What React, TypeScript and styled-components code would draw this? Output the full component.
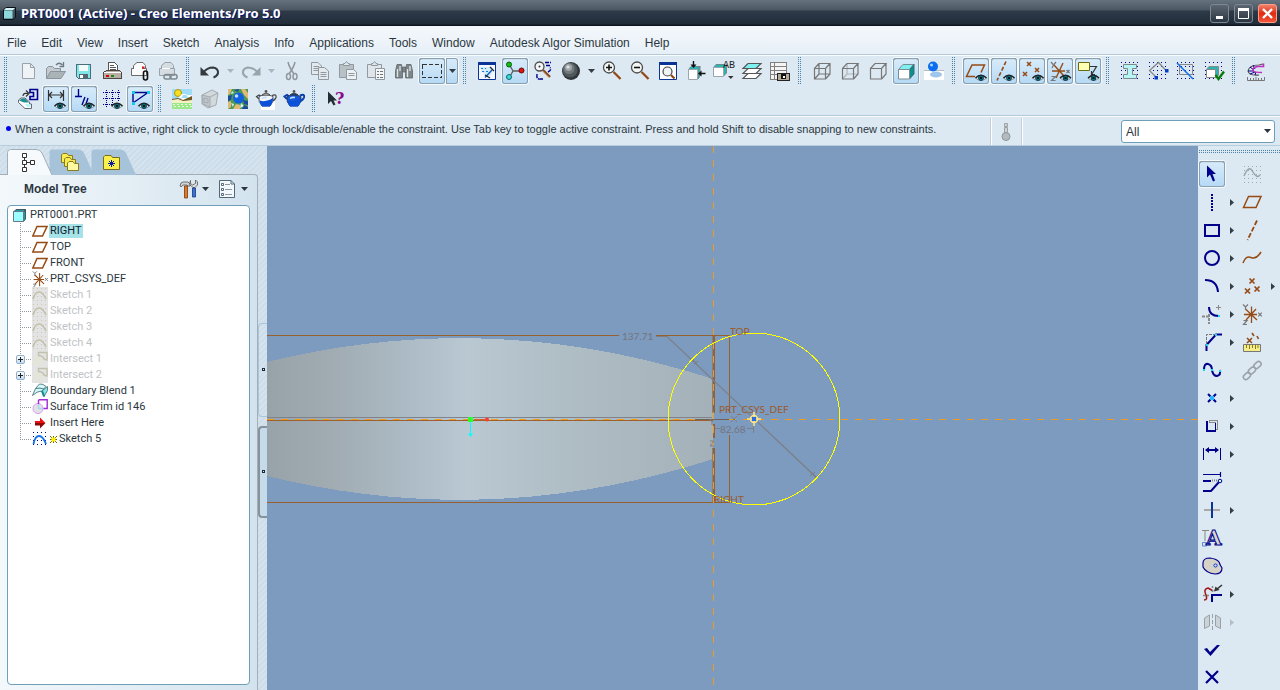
import React from 'react';
import styled, { createGlobalStyle, css } from 'styled-components';

const NAVY = '#00008b';
const BROWN = '#964a14';
const GREY = '#8a949b';
const INK = '#2b3740';
const TEAL = '#007f80';

const GlobalStyle = createGlobalStyle`
  *, *::before, *::after { box-sizing: border-box; }
  html, body { margin: 0; padding: 0; }
  body { font-family: 'Liberation Sans', Arial, sans-serif; font-size: 12px; color: ${INK}; }
  button { font: inherit; color: inherit; border: 0; padding: 0; background: none; }
  ul { list-style: none; margin: 0; padding: 0; }
`;

/* ---------- drawing helpers ---------- */

const Eye = ({ x = 16, y = 19 }: { x?: number; y?: number }) => (
  <g>
    <path d={`M${x - 5.5} ${y}Q${x} ${y - 5.5} ${x + 5.5} ${y}Q${x} ${y + 5} ${x - 5.5} ${y}z`} fill="#e8f0f4" stroke="#6c7a80" strokeWidth=".8" />
    <path d={`M${x - 5.5} ${y}Q${x} ${y - 5.5} ${x + 5.5} ${y}`} fill="none" stroke="#222" strokeWidth="1.4" />
    <circle cx={x} cy={y} r="2.5" fill={TEAL} stroke="#123" strokeWidth=".8" />
    <rect x={x - 1} y={y - 1} width="2" height="2" fill="#012" />
  </g>
);

const Dots = ({ x = 3, y = 3, n = 5, step = 4, color = NAVY }: { x?: number; y?: number; n?: number; step?: number; color?: string }) => (
  <g stroke={color} strokeDasharray={`1 ${step - 1}`} shapeRendering="crispEdges">
    {Array.from({ length: n }, (_, i) => (
      <path key={i} d={`M${x} ${y + i * step + 0.5}h${(n - 1) * step + 1}`} />
    ))}
  </g>
);

const Cross = ({ x, y, s = 2, c = BROWN, w = 1.5 }: { x: number; y: number; s?: number; c?: string; w?: number }) => (
  <path d={`M${x - s} ${y - s}l${2 * s} ${2 * s}m0 ${-2 * s}l${-2 * s} ${2 * s}`} stroke={c} strokeWidth={w} fill="none" />
);

const Lens = ({ x, y, r = 5.5 }: { x: number; y: number; r?: number }) => (
  <g>
    <path d={`M${x + r - 1} ${y + r - 1}L${x + r + 6} ${y + r + 6}`} stroke="#8c4a1c" strokeWidth="2.4" />
    <path d={`M${x + r - 1.5} ${y + r}L${x + r + 5} ${y + r + 6.5}`} stroke="#d9a27a" strokeWidth=".7" />
    <circle cx={x} cy={y} r={r} fill="#f4f6f6" stroke="#4b4b4b" strokeWidth="1.3" />
  </g>
);

const Mail = ({ c, fill }: { c: string; fill: string }) => (
  <g stroke={c} fill={fill}>
    <path d="M5.5 9.5V6.5L9 3.500H15L17.5 6.5V9.5z" />
    <path d="M3.5 9.5H18.5V16.5H3.5z" />
    <path d="M6 9.500H14" stroke="#fff" />
  </g>
);

const Teapot = ({ light = false }: { light?: boolean }) => (
  <g>
    {light && <path d="M7 14h14v9H7z" fill="#fff" />}
    <path d="M5 12L2.5 9.5L5 8L8 10M18 8.5q5-2 4 2q-1 3-5 4" fill="none" stroke={light ? '#444' : '#0a3fb0'} strokeWidth={light ? 1.2 : 2} />
    <path d="M5 9.5Q12 6 19 9.5Q20 15 16 19H8Q4 15 5 9.5z" fill={light ? '#f4f4f4' : '#1457d8'} stroke="#26324a" strokeWidth=".8" />
    <path d="M5.5 13.5Q12 16 19 11Q19 16 16 19.5H8Q6 17 5.5 13.5z" fill="#0b50d8" />
    <path d="M8 8Q12 4.5 16 8z" fill={light ? '#ddd' : '#0c43b8'} stroke="#333" strokeWidth=".8" />
    <circle cx="12" cy="4.5" r="1.4" fill="#555" />
    <path d="M8 11.5Q10 10 13 10.5" stroke="#bfe0ff" strokeWidth="1.5" fill="none" />
  </g>
);

const Csys = () => (
  <g>
    <path d="M11.5 4.5V21M4 12.5H17M5.5 7L17 18M16 7L6 18" stroke={BROWN} strokeWidth="1.3" fill="none" />
    <path d="M3 2.5L5.5 5L8 2.5M5.5 5V8M3.5 18.5H7L3.5 22.5H7" stroke="#777" strokeWidth="1.2" fill="none" />
    <Cross x={20} y={12.5} s={1.8} c="#777" w={1.2} />
  </g>
);

/* ---------- icon drawings, all on a 24 by 24 grid ---------- */

const icons = {
  newFile: <path d="M6.500 4.500H14.500L18.500 8.500V19.500H6.500zM14.500 4.500V8.500H18.500" fill="#f0f3f6" stroke="#9aa2aa" />,
  open: (
    <g stroke={GREY} fill="#c3cbd0">
      <path d="M2.5 19.5V9.5L4.5 7.5H8.5L10.5 9.5H16.5V12" />
      <path d="M2.5 19.5L6.5 12.5H21.5L17 19.5z" fill="#aab3b8" />
      <path d="M12 6Q15 2.5 18.5 6M19.5 3V7.5H15.5" fill="none" stroke="#6f7a80" strokeWidth="1.3" />
    </g>
  ),
  save: (
    <g shapeRendering="crispEdges">
      <path d="M4.500 5.500H18.500V19.500H6.500L4.500 17.500z" fill="#7fe6ea" stroke="#4a6e7a" />
      <path d="M7 6H16V12H7z" fill="#f3fafa" />
      <path d="M7 15H16V19H7z" fill="#56666e" />
      <path d="M8 16H11V19H8z" fill="#fff" />
    </g>
  ),
  print: (
    <g shapeRendering="crispEdges">
      <path d="M8.5 12V3.5H14.5L17.5 6.5V12z" fill="#fff" stroke="#555" />
      <path d="M10 6.5H14M10 8.5H16M10 10.5H16" stroke="#555" />
      <path d="M3.5 13.5L6.5 11.5H19.5L21.5 13.5V19.5H3.5z" fill="#b7aea6" stroke="#4d4744" />
      <path d="M4 13.5H21" stroke="#fff" />
      <path d="M6 16.5H9" stroke="#d00" strokeWidth="2" />
      <path d="M11 16.5H14" stroke="#1a8a1a" strokeWidth="2" />
    </g>
  ),
  mailClip: (
    <g>
      <Mail c="#6b6b6b" fill="#fbfbfb" />
      <path d="M14 8.5h2.5" stroke="#e11" strokeWidth="2" />
      <rect x="15.5" y="12" width="4" height="9" rx="2" fill="none" stroke="#111" strokeWidth="1.6" />
    </g>
  ),
  mailLink: (
    <g>
      <Mail c="#9aa2a8" fill="#d6dde2" />
      <g fill="none" stroke="#7f898f" strokeWidth="1.5">
        <rect x="8" y="15.5" width="7" height="4.5" rx="2" />
        <rect x="14" y="15.5" width="7" height="4.5" rx="2" />
      </g>
    </g>
  ),
  undo: (
    <g>
      <path d="M5 14Q9 8.5 15 8.5Q20.5 9.5 20 14Q19.5 17 15.5 18.5" fill="none" stroke="#333a40" strokeWidth="2" />
      <path d="M2.5 8V16.5H11z" fill="#333a40" />
    </g>
  ),
  redo: (
    <g>
      <path d="M19 14Q15 8.5 9 8.5Q3.5 9.5 4 14Q4.5 17 8.5 18.5" fill="none" stroke="#99a3a9" strokeWidth="2" />
      <path d="M21.5 8V16.5H13z" fill="#99a3a9" />
    </g>
  ),
  cut: (
    <g fill="none" stroke="#8f979c" strokeWidth="1.5">
      <path d="M8 3Q9 8 14 15M15 3Q14 8 9 15" />
      <ellipse cx="8.5" cy="17.5" rx="2" ry="3" />
      <ellipse cx="15" cy="17.5" rx="2" ry="3" />
    </g>
  ),
  copy: (
    <g stroke="#8f999f" fill="#e3e9ec">
      <path d="M3.5 3.5H10L13.5 7V15.5H3.5zM5.5 7.5H11M5.5 9.5H11M5.5 11.5H11" />
      <path d="M10.5 8.5H16.5L20.5 12V20.5H10.5zM12.5 13.5H18.5M12.5 15.5H18.5M12.5 17.5H18.5" />
    </g>
  ),
  paste: (
    <g stroke="#8f999f" fill="#b8c1c6">
      <path d="M3.5 5.5H17.5V18.5H3.5z" />
      <path d="M7.5 6.5V4.5H9L10.5 2.5L12 4.5H13.5V6.5z" fill="#e3e9ec" />
      <path d="M10.5 10.5H17.5L20.5 13V20.5H10.5zM12.5 14.5H18.5M12.5 16.5H18.5" fill="#eef1f3" />
    </g>
  ),
  pasteSpecial: (
    <g stroke="#8f999f" fill="#dfe5e9">
      <path d="M3.5 5.5H17.5V18.5H3.5z" />
      <path d="M7.5 6.5V4.5H9L10.5 2.5L12 4.5H13.5V6.5z" />
      <path d="M11.5 9.5H20.5V20.5H11.5z" fill="#f3f5f6" />
      <path d="M13 12.5h2m1 0h3M13 15.5h2m1 0h3M13 18.5h2m1 0h3" stroke="#6b767c" />
    </g>
  ),
  find: (
    <g fill="#7d8588" stroke="#5d666a" strokeWidth=".8">
      <path d="M5 5.5H9.5L10.5 12V19H3.5V12zM14.5 5.5H19L20.5 12V19H13.5V12z" />
      <path d="M10.5 8H13.5V13H10.5z" />
      <path d="M5.5 10V18M8 7V12M15.5 10V18M18 7V12" stroke="#dfe6e8" strokeWidth="1.3" />
    </g>
  ),
  selectBox: <path d="M2.500 5.500H21.500V18.500H2.500z" fill="none" stroke="#333" strokeDasharray="4 2" shapeRendering="crispEdges" />,
  sketchView: (
    <g>
      <path d="M3.5 3.5H20.5V20.5H3.5z" fill="#f2f8fd" stroke="#0a3596" />
      <path d="M3 3H21V6H3z" fill="#0a3596" />
      <path d="M5 8L17 8Q19 14 14 18L10 17z" fill="#d3edfb" />
      <path d="M6 9.5H11M7 12.5H14M10 16.5H13" stroke="#1a7ad0" strokeDasharray="2 2" fill="none" />
      <path d="M10 18.500L17 11" fill="none" stroke="#0a5fc0" strokeWidth="1.4" />
      <path d="M10 16L15 19M15 8L19 12" fill="none" stroke="#222" strokeWidth="1.2" />
    </g>
  ),
  nodes: (
    <g>
      <path d="M6 5L10 12L6 19M10 12H19" fill="none" stroke="#5a5a5a" strokeWidth="1.3" />
      <circle cx="6" cy="5.5" r="2.5" fill="#12c012" stroke="#075a07" />
      <circle cx="18.5" cy="11.5" r="2.5" fill="#e01414" stroke="#6a0707" />
      <circle cx="6" cy="18" r="2.5" fill="#39dada" stroke="#0a6a6a" />
    </g>
  ),
  repaint: (
    <g>
      <Lens x={8.5} y={7.5} r={4.5} />
      <circle cx="8.5" cy="7.5" r="1" fill="#333" />
      <path d="M14 3.5H20M15 6.5H19M17 13Q21 11 19 8.500M6 15Q5 21 10 20M12 20H9" fill="none" stroke={NAVY} strokeWidth="1.4" strokeDasharray="4 1" />
    </g>
  ),
  shade: (
    <g>
      <circle cx="12" cy="12" r="9" fill="#30363a" />
      <circle cx="11" cy="11" r="7.5" fill="#50585c" />
      <circle cx="10" cy="9.5" r="5.5" fill="#72797d" />
      <circle cx="9.5" cy="8.5" r="3.5" fill="#a0a6a9" />
      <circle cx="9" cy="8" r="1.6" fill="#dfe3e5" />
    </g>
  ),
  zoomIn: (
    <g>
      <Lens x={9} y={8.5} />
      <path d="M6 8.5H12M9 5.5V11.5" stroke="#111" strokeWidth="1.6" />
    </g>
  ),
  zoomOut: (
    <g>
      <Lens x={9} y={8.5} />
      <path d="M6 8.5H12" stroke="#111" strokeWidth="1.6" />
    </g>
  ),
  refit: (
    <g>
      <path d="M3.5 3.5H20.5V20.5H3.5z" fill="#fff" stroke="#0a3596" />
      <path d="M3 3H21V6H3z" fill="#0a3596" />
      <circle cx="11.5" cy="12.5" r="4.5" fill="#eef3f4" stroke="#444" strokeWidth="1.2" />
      <path d="M15 16L18.5 19.5" stroke="#8c4a1c" strokeWidth="2.2" />
    </g>
  ),
  reorient: (
    <g>
      <path d="M4.5 10.5L7 7.5H16L14 10.5zM14 10.5L16 7.500V17L14 20z" fill="#2ab5b5" stroke="#6b8a8a" />
      <path d="M4.5 10.5H13.5V20.5H4.5z" fill="#fff" stroke="#9aa8ad" />
      <path d="M9.500 2V7M21.500 14.500H16" stroke="#111" strokeWidth="1.4" />
      <path d="M6.500 5.500H12.500L9.500 9zM17.500 11.500V17.500L14 14.500z" fill="#111" />
    </g>
  ),
  savedViews: (
    <g>
      <path d="M1.5 8.5L4 5.5H13L11.5 8.5zM11.5 8.5L14.5 5.5V14L11.5 17z" fill="#2ab5b5" stroke="#6b8a8a" />
      <path d="M1.5 8.5H11.5V17.5H1.5z" fill="#fff" stroke="#9aa8ad" />
      <text x="11" y="9" fontFamily="Liberation Mono, monospace" fontSize="10" fill="#222">AB</text>
      <path d="M16 17H21.5L18.8 20z" fill="#333" />
    </g>
  ),
  layers: (
    <g stroke="#555" fill="#fff" strokeWidth="1.2">
      <path d="M3 19.5L8 14.5H21L16 19.5z" />
      <path d="M3 14.5L8 9.5H21L16 14.5z" />
      <path d="M3 9.5L8 4.5H21L16 9.5z" fill="#7ff0f0" />
    </g>
  ),
  viewManager: (
    <g shapeRendering="crispEdges">
      <path d="M2.5 3.5H18.5V20.5H2.5zM6.5 3.5V20M2.5 7.5H18M2.5 11.5H18M2.5 15.5H18" fill="#f4f4f4" stroke="#808080" />
      <path d="M9.5 14.5H21.5V21.5H9.5z" fill="#b3ab98" stroke="#222" />
      <path d="M13 15H18V20H13z" fill="#111" />
      <path d="M14.5 16.5H16.5V18.5H14.5z" fill="#fff" />
    </g>
  ),
  wireframe: (
    <path d="M4.5 9.5H15.5V20H4.5zM9 4.5H20V15H9zM4.5 9.5L9 4.5M15.5 9.5L20 4.5M15.5 20L20 15M4.5 20L9 15" stroke="#777" fill="none" strokeWidth="1.2" />
  ),
  hiddenLine: (
    <g stroke="#777" fill="none" strokeWidth="1.2">
      <path d="M9 4.5V15H20M4.5 20L9 15" stroke="#b0b6ba" />
      <path d="M4.5 9.5H15.5V20H4.5zM4.5 9.5L9 4.5H20L15.5 9.5M20 4.5V15L15.5 20" />
    </g>
  ),
  noHidden: <path d="M4.500 9.500H15.500V20H4.500zM4.500 9.500L9 4.500H20L15.500 9.500M20 4.500V15L15.500 20" stroke="#777" fill="none" strokeWidth="1.200" />,
  shaded: (
    <g stroke="#7b8d94">
      <path d="M4.5 10.5L9 5.5H20L15.5 10.500z" fill="#7ff0f0" />
      <path d="M15.5 10.5L20 5.5V15L15.5 20z" fill="#0c8e8e" stroke="#3c6b70" />
      <path d="M4.5 10.5H15.5V20H4.5z" fill="#fff" />
    </g>
  ),
  shadow: (
    <g>
      <path d="M2 11H22V21H2z" fill="#fff" />
      <path d="M2 11H22V12H2z" fill="#b4bcc2" />
      <ellipse cx="14" cy="15.5" rx="6" ry="3" fill="#9ec5ea" />
      <circle cx="11" cy="7.5" r="5" fill="#0a6cf0" />
      <circle cx="9.5" cy="6" r="1.5" fill="#a9d6ff" />
    </g>
  ),
  planeEye: (
    <g>
      <path d="M11 17.5H2.5L8 6H20.5L17 13.5" fill="none" stroke={BROWN} strokeWidth="1.5" />
      <Eye x={17} />
    </g>
  ),
  axisEye: (
    <g>
      <path d="M14 2.5L5 21.5" stroke={BROWN} strokeWidth="1.6" strokeDasharray="4 2" />
      <Eye x={17} />
    </g>
  ),
  pointsEye: (
    <g>
      <Cross x={9} y={5} />
      <Cross x={5} y={15} />
      <Cross x={17} y={11} />
      <Eye x={18} y={19} />
    </g>
  ),
  csysEye: (
    <g>
      <path d="M15 4L8 19M4 12H17M6 6L16 17" stroke={BROWN} strokeWidth="1.4" fill="none" />
      <path d="M3 3L5.5 6L8 3M5.5 6L4 9M3.5 17.5H7.5L3.5 21.500H7.5" stroke="#777" strokeWidth="1.2" fill="none" />
      <Cross x={20} y={12.5} s={1.5} c="#777" w={1.2} />
      <Eye x={17.5} />
    </g>
  ),
  noteEye: (
    <g>
      <path d="M2.5 3.5H13.5V11.5H2.5z" fill="#ffffb4" stroke="#6c6a12" />
      <path d="M14 7.5H20.500L16 15M15.5 12V15.5H19" fill="none" stroke="#333" strokeWidth="1.2" />
      <Eye x={17.5} />
    </g>
  ),
  gridI: (
    <g>
      <Dots />
      <path d="M5.5 5.5H18.5V9.5H14.5V15.5H18.5V19.5H5.5V15.5H9.5V9.5H5.5z" fill="#b8f6f6" stroke="#7c8a8e" />
    </g>
  ),
  gridPoly: (
    <g>
      <Dots />
      <path d="M10 18L3.5 11.5L12.5 3.5L20.5 12" fill="none" stroke="#888" strokeWidth="1.3" />
      <path d="M8.5 17h3.5v3.5H8.5zM19 10h3.5v3.5H19z" fill="#0a3cc8" />
    </g>
  ),
  gridCut: (
    <g>
      <Dots />
      <path d="M5.5 5.5H18.5V15.5H5.5z" fill="none" stroke="#888" />
      <path d="M3 4L19 20" stroke="#1670e8" strokeWidth="1.6" />
    </g>
  ),
  gridOk: (
    <g>
      <Dots />
      <path d="M4.5 10.5L7 7.5H16.5V16L14 19z" fill="#2ab5b5" stroke="#888" />
      <path d="M4.5 10.5H13.5V18.5H4.5z" fill="#fff" stroke="#888" />
      <path d="M13.5 16L16.5 20L22 12.5" fill="none" stroke="#0a7a0a" strokeWidth="2.4" />
    </g>
  ),
  curvature: (
    <g fill="none">
      <path d="M19 5L15 6Q5 6 4 12Q5 17 15 16" stroke="#555" strokeWidth="1.2" />
      <path d="M6 8L10 11M9 6L11 10M4 12L10 12M6 15L11 13M11 16L12 13" stroke={NAVY} />
      <path d="M19.5 4.5V7.5H14Q8.5 8 9 11.5Q10 13.5 18 13.5" stroke="#c030c0" strokeWidth="1.6" />
      <path d="M3.5 18V21.5H20.5V18M6.5 19V21M9.5 19V21M12 18V21M14.5 19V21M17.5 19V21" stroke="#777" />
    </g>
  ),
  placeView: (
    <g>
      <path d="M14 5.5V2.5H21.5V12.5H14V9.5H17.5V5.5z" fill="none" stroke={NAVY} strokeWidth="1.6" />
      <path d="M7 9Q7 5.500 12 6.5M10 3.5L13 6.5L10 9.5" fill="none" stroke="#333" strokeWidth="1.2" />
      <path d="M2.5 13L5 11H9L13.5 15V17H15.5V21.5H9L2.5 15.500z" fill="#fff" stroke="#667" />
      <path d="M3 13.5L6 11.5H9L13 15.5H8z" fill="#1f8f90" />
      <path d="M9 17H14L15 20H11z" fill="#b6f8f8" />
    </g>
  ),
  dimEye: (
    <g>
      <path d="M4.5 3V14M19.5 3V14M5 8H19M8 5L5 8L8 11M16 5L19 8L16 11" fill="none" stroke="#333" strokeWidth="1.2" />
      <Eye />
    </g>
  ),
  constrEye: (
    <g>
      <path d="M6.5 2V9M3 9.500H10M10 18L13 10M14 17L16 11" fill="none" stroke={NAVY} strokeWidth="1.4" />
      <Eye x={17} y={19} />
    </g>
  ),
  gridEye: (
    <g>
      <path
        d="M6.500 3V20M12.500 3V20M18.500 3V15M3 5.500H21M3 11.500H21M3 17.500H12"
        stroke={NAVY}
        strokeDasharray="1 1"
        shapeRendering="crispEdges"
      />
      <Eye x={17} y={19} />
    </g>
  ),
  vertEye: (
    <g>
      <path d="M5 5.5H20M5 5.5V16L20 5.5" fill="none" stroke={NAVY} strokeWidth="1.4" />
      <path d="M4 4h3v3H4zM19 4h3v3h-3zM4 15h3v3H4z" fill="#18c8e8" />
      <Eye x={16} y={19} />
    </g>
  ),
  scene: (
    <g>
      <path d="M2 2H22V14H2z" fill="#9fdcf8" />
      <circle cx="8" cy="6" r="3.5" fill="#f4e020" stroke="#b8960a" />
      <path d="M8 11H18L16 7H12zM13 8H22V14H10z" fill="#fff" />
      <path d="M2 12L8 11L13 13L22 9V15H2z" fill="#6c5a24" />
      <path d="M2 13L8 12L13 14L22 13V16H2z" fill="#f4f0c8" />
      <path d="M2 16H22V22H2z" fill="#9be888" />
      <path d="M3 17.5H22M4 19.5H22" stroke="#e8fbe0" strokeDasharray="2 2" />
    </g>
  ),
  sceneGrey: (
    <g stroke="#a3abb0" fill="#d2d9dd">
      <path d="M4 8L14 3L20 6L18 18L10 21L4 17z" />
      <path d="M4 8L12 10V20L5 17zM12 10L20 6M6 11L10 12V16L6 15z" fill="#c0c8cd" />
    </g>
  ),
  globeMap: (
    <g>
      <path d="M2 2H22V22H2z" fill="#4c9a58" />
      <path d="M2 2H6L4 7L2 8zM15 2H19L22 6V12L18 8zM7 22L10 17L14 18V22zM2 15L5 14V20L2 22z" fill="#e0b878" />
      <path d="M2 9L6 8L5 13L2 14zM17 13L22 14V18L18 17zM8 3L13 2L12 5zM18 18L22 20V22H16z" fill="#1e4a9a" />
      <path d="M5 16L8 17L7 20zM15 16L18 19L14 21zM6 4L8 6L5 7z" fill="#d8f0e8" />
      <circle cx="12.5" cy="11" r="5.5" fill="#1060e0" />
      <circle cx="10.5" cy="9" r="1.8" fill="#bfe0ff" />
    </g>
  ),
  teapotWire: <Teapot light />,
  teapot: <Teapot />,
  whatsThis: (
    <g>
      <path d="M4 4.5V17L7 14L9.500 18.5L11.500 17.5L9.500 13.5H13z" fill="#222c33" />
      <text x="11" y="17" fontFamily="DejaVu Serif, serif" fontWeight="bold" fontSize="16" fill="#8a0a8a">?</text>
    </g>
  ),
  pointer: <path d="M7 3.500V15.500L10 12.500L13 19.500L15 18.500L12.500 12H16z" fill={NAVY} />,
  lineTool: <path d="M12 4V21" stroke={NAVY} strokeWidth="2" strokeDasharray="2 1" />,
  rectTool: <path d="M5 7H19V18H5z" stroke={NAVY} strokeWidth="2" fill="none" shapeRendering="crispEdges" />,
  circleTool: <circle cx="12" cy="12" r="7" stroke={NAVY} strokeWidth="2" fill="none" />,
  arcTool: <path d="M5 6Q17 6 18 18" stroke={NAVY} strokeWidth="2" fill="none" />,
  filletTool: (
    <g fill="none">
      <path d="M9 5Q9 14 19 14" stroke={NAVY} strokeWidth="2" />
      <path d="M2 14.5H10M9 12V22" stroke="#8a8a8a" strokeWidth="2" strokeDasharray="3 1" />
      <path d="M18.5 3V8M16 5.5H21" stroke="#8a8a8a" />
      <path d="M18 13h2v2h-2z" fill="#19d8f0" />
    </g>
  ),
  chamferTool: (
    <g fill="none">
      <path d="M6.5 21V15L16 4.5H22" stroke={NAVY} strokeWidth="2" />
      <path d="M6.5 14V4.5H15" stroke="#777" strokeDasharray="3 1" />
      <path d="M6 14h2v2H6zM15 4h2v2h-2z" fill="#19d8f0" />
    </g>
  ),
  splineTool: (
    <g fill="none">
      <path d="M4 12Q4 5 8 6Q12 7 12 12Q13 18 17 18Q21 17 20 12" stroke={NAVY} strokeWidth="2" />
      <path d="M3 11h2v2H3zM11 11h2v2h-2zM19 12h2v2h-2z" fill="#19d8f0" />
    </g>
  ),
  pointTool: (
    <g>
      <Cross x={12} y={12} s={4} c={NAVY} w={2} />
      <path d="M10 10h4v4h-4z" fill="#29b4ff" />
    </g>
  ),
  edgeTool: (
    <g fill="none" shapeRendering="crispEdges">
      <path d="M9 8V6.5H17.5V15.5H16M8.5 8.5H15.5V16" stroke="#8a8a8a" />
      <path d="M7 7V17H16" stroke={NAVY} strokeWidth="2" />
      <path d="M15.5 9V17" stroke={NAVY} />
    </g>
  ),
  dimTool: (
    <g>
      <path d="M3.5 6V18M20.5 6V18" stroke={NAVY} />
      <path d="M6 8H18" stroke={NAVY} strokeWidth="2" />
      <path d="M5 8L9 5V11zM19 8L15 5V11z" fill={NAVY} />
    </g>
  ),
  modifyTool: (
    <g fill="none" stroke={NAVY}>
      <path d="M3 4.5H20M20.5 2V7" strokeWidth="1.2" />
      <path d="M3 11H11M3 21H11L19 12" strokeWidth="2" />
      <path d="M12 10.5H18" stroke="#888" strokeDasharray="1 1" strokeWidth="2" />
      <circle cx="20" cy="11" r="1.8" fill="#bff" />
    </g>
  ),
  constrainTool: (
    <g shapeRendering="crispEdges">
      <path d="M4 12H20" stroke="#aaa9a6" strokeWidth="2" />
      <path d="M12 4V20" stroke="#0a3596" strokeWidth="2" />
    </g>
  ),
  textTool: (
    <g>
      <path d="M2 4.5H9M5 4V15" stroke="#888" fill="none" />
      <path d="M2.5 16.5h4v3.5h-4z" fill="#cfe6ff" stroke="#5a8ec8" />
      <text x="6" y="19" fontFamily="DejaVu Serif, serif" fontWeight="bold" fontSize="20" fill="#d9d5cb" stroke={NAVY}>A</text>
    </g>
  ),
  paletteTool: (
    <g>
      <path d="M3 9Q3 4 10 4Q17 5 19 8Q20 11 22 14Q22 20 15 20Q6 19 3 13z" fill="#d6d2c8" stroke={NAVY} strokeWidth="1.2" />
      <circle cx="15.5" cy="11.5" r="1.6" fill="#cdf" stroke="#0a3cc8" />
    </g>
  ),
  trimTool: (
    <g fill="none">
      <path d="M4 18Q8 18 6 13Q3 7 8 6Q10 7 13 9" stroke="#a01818" strokeWidth="1.6" />
      <path d="M12 20V13H22" stroke={NAVY} strokeWidth="2" />
      <path d="M3 13.5H11M12.5 4V12" stroke="#888" strokeDasharray="2 2" strokeWidth="1.5" />
      <path d="M22 3L17 7" stroke="#333" strokeWidth="1.6" />
      <path d="M14 9.5L15.5 4.5L19.5 8z" fill="#333" />
    </g>
  ),
  mirrorTool: (
    <g fill="#ccd3d8" stroke="#98a1a7">
      <path d="M4.5 18.5V8L9.5 5V16zM20.5 18.5V8L15.5 5V16z" />
      <path d="M12.5 4V21" strokeDasharray="4 2" />
    </g>
  ),
  doneTool: <path d="M4 11L7 10L10 14L17 7H20L10.500 18z" fill={NAVY} />,
  quitTool: <path d="M6 5L18 17M18 5L6 17" stroke={NAVY} strokeWidth="2.200" fill="none" />,
  sketchTool: (
    <g>
      <Dots color="#a3aaae" x={4} y={4} />
      <path d="M4 14Q9 2 13 10Q17 17 20 13" stroke="#9aa3a8" strokeWidth="1.4" fill="none" />
    </g>
  ),
  planeTool: <path d="M3.500 17.500L8.500 6.500H21L16 17.500z" fill="none" stroke={BROWN} strokeWidth="1.500" />,
  axisTool: <path d="M17 2.500L7.500 22" stroke={BROWN} strokeWidth="1.800" strokeDasharray="5 2" />,
  curveTool: <path d="M3 17Q6 9 11 11.500Q16 14 21 6" stroke={BROWN} strokeWidth="1.500" fill="none" />,
  pointsTool: (
    <g>
      <Cross x={12} y={7} s={2.5} w={1.7} />
      <Cross x={7.5} y={17} s={2.5} w={1.7} />
      <Cross x={17} y={15} s={2.5} w={1.7} />
    </g>
  ),
  csysTool: <Csys />,
  analysisTool: (
    <g>
      <path d="M12 3L14 6M17 6L18.5 9M7 8L12 13M12 8L7 13" stroke={BROWN} strokeWidth="1.6" fill="none" />
      <path d="M3.5 14.5H20.5V21.5H3.5z" fill="#f6ee86" stroke="#777" />
      <path d="M6.5 15V18M9.5 15V19M12.5 15V18M15.5 15V19M18 15V18" stroke="#8a7a30" />
    </g>
  ),
  chainTool: (
    <g fill="none" stroke="#9aa3a8" strokeWidth="1.5">
      <rect x="-4" y="-2.5" width="8" height="5" rx="2.5" transform="translate(7 18) rotate(-42)" />
      <rect x="-4" y="-2.5" width="8" height="5" rx="2.5" transform="translate(12 12.5) rotate(-42)" />
      <rect x="-4" y="-2.5" width="8" height="5" rx="2.5" transform="translate(17.5 7) rotate(-42)" />
    </g>
  ),
};

type IconName = keyof typeof icons;

/* ---------- shell ---------- */

const Shell = styled.div`
  display: flex;
  flex-direction: column;
  height: 100vh;
  background: #dce9f2;
  overflow: hidden;
`;

const TitleBar = styled.header`
  display: flex;
  align-items: center;
  height: 26px;
  flex: none;
  padding: 0 3px;
  gap: 5px;
  background: linear-gradient(#66727e 0, #4b5763 10px, #2e3a48 11px, #222d3a 24px, #10161e 25px);
`;

const AppTitle = styled.h1`
  flex: 1;
  margin: 0;
  font: bold 13px/20px 'Noto Sans', 'Open Sans', sans-serif;
  color: #fff;
  text-shadow: 1px 1px 0 #0a1770;
  white-space: nowrap;
`;

const WindowButton = styled.button<{ $close?: boolean }>`
  width: 19px;
  height: 19px;
  display: grid;
  place-items: center;
  border: 1px solid ${p => (p.$close ? '#ff9d86' : '#7c8894')};
  border-radius: 3px;
  background: ${p => (p.$close ? 'linear-gradient(#f0806a, #e02c10 50%, #f0553a)' : 'linear-gradient(#5b6671, #2b3643)')};
  svg { display: block; }
`;

const MenuBar = styled.nav`
  display: flex;
  align-items: center;
  flex: none;
  height: 30px;
  padding: 4px 0 0 7px;
  gap: 15px;
  background: linear-gradient(#f4f8fc, #e6eff7);
  border-bottom: 1px solid #fafdff;
  box-shadow: inset 0 -1px 0 #b3cadb;
`;

const MenuItem = styled.button`
  line-height: 16px;
  white-space: nowrap;
`;

const Toolbars = styled.div`
  flex: none;
  padding: 1px 0 3px;
  border-bottom: 1px solid #fafdff;
  box-shadow: inset 0 -1px 0 #b3cadb;
`;

const ToolRow = styled.div`
  display: flex;
  height: 28px;
`;

const dotPattern = css`
  background-image: conic-gradient(from 270deg at 1px 1px, #4a82aa 90deg, transparent 0);
  background-size: 2px 2px;
`;

const Grip = styled.span`
  width: 3px;
  margin: 0 7px 0 4px;
  flex: none;
  ${dotPattern}
`;

const ToolGroup = styled.div`
  display: flex;
  align-items: stretch;
`;

const ToolButton = styled.button<{ $active?: boolean }>`
  width: 26px;
  height: 26px;
  margin: 1px;
  flex: none;
  display: grid;
  place-items: center;
  border-radius: 3px;
  svg { display: block; }
  ${p => p.$active && css`
    background: linear-gradient(#d9ecfa, #b5d9f5);
    box-shadow: inset 0 0 0 1px #8ba1b1, inset 0 2px 1px -1px #66727c, 0 0 0 1px #f5fafd;
  `}
`;

const DropButton = styled.button<{ $muted?: boolean; $joined?: boolean }>`
  width: ${p => (p.$joined ? 12 : 13)}px;
  flex: none;
  display: grid;
  place-items: center;
  color: ${p => (p.$muted ? '#a9b6bf' : '#333d45')};
  ${p => p.$joined && css`
    height: 26px;
    margin: 1px 1px 1px 0;
    border-radius: 0 3px 3px 0;
    background: linear-gradient(#d9ecfa, #b5d9f5);
    box-shadow: inset 0 0 0 1px #8ba1b1, 0 0 0 1px #f5fafd;
  `}
`;

const MessageBar = styled.div`
  display: flex;
  align-items: center;
  flex: none;
  height: 29px;
  padding: 0 5px 0 6px;
  box-shadow: inset 0 -1px 0 #b9cedd;
`;

const Bullet = styled.span`
  width: 5px;
  height: 5px;
  margin: 0 4px 6px 0;
  flex: none;
  border-radius: 50%;
  background: #0000f0;
`;

const Message = styled.p`
  margin: 0 0 6px;
  flex: 1;
  min-width: 0;
  overflow: hidden;
  white-space: nowrap;
  font-size: 11px;
  line-height: 16px;
`;

const StatusCell = styled.div`
  display: grid;
  place-items: center;
  flex: none;
  width: 32px;
  height: 27px;
  margin-right: 99px;
  border: solid #c3cfd8;
  border-width: 0 1px;
  box-shadow: 1px 0 0 #fff, inset 1px 0 0 #fff;
`;

const FilterBox = styled.div`
  position: relative;
  flex: none;
  width: 154px;
`;

const FilterSelect = styled.select`
  appearance: none;
  display: block;
  width: 100%;
  height: 23px;
  padding: 0 4px;
  font: 12px/16px 'Liberation Sans', Arial, sans-serif;
  color: ${INK};
  background: #fff;
  border: 1px solid #6d9fb8;
  border-radius: 3px;
`;

const FilterArrow = styled.span`
  position: absolute;
  right: 4px;
  top: 9px;
  line-height: 0;
  pointer-events: none;
`;

const Main = styled.main`
  display: flex;
  flex: 1;
  min-height: 0;
`;

/* ---------- navigator ---------- */

const Navigator = styled.aside`
  display: flex;
  flex: none;
  width: 267px;
  background: repeating-linear-gradient(135deg, #d4e3ee 0 2px, #cddeea 2px 4px);
`;

const NavColumn = styled.div`
  flex: 1;
  display: flex;
  flex-direction: column;
  padding-top: 3px;
`;

const TabStrip = styled.div`
  display: flex;
  padding-left: 7px;
  height: 25px;
`;

const Tab = styled.button<{ $active?: boolean }>`
  position: relative;
  width: 42px;
  height: 26px;
  z-index: ${p => (p.$active ? 1 : 0)};
  svg { display: block; }
`;

const TabShape = styled.svg`
  position: absolute;
  left: 0;
  top: 0;
`;

const TabIcon = styled.svg`
  position: relative;
  margin-left: 9px;
`;

const Pane = styled.section`
  flex: 1;
  min-height: 0;
  display: flex;
  flex-direction: column;
  padding: 0 7px 5px;
  border: solid #a3afb8;
  border-width: 1px 1px 0 0;
  border-radius: 0 4px 0 0;
  background: linear-gradient(90deg, #f3f8fb, #d3e3ee);
`;

const PaneHead = styled.div`
  display: flex;
  align-items: center;
  gap: 9px;
  height: 30px;
  flex: none;
  padding: 0 2px 2px 17px;
`;

const PaneTitle = styled.h2`
  flex: 1;
  margin: 0;
  font-size: 12px;
  line-height: 16px;
`;

const PaneTool = styled.button`
  display: flex;
  align-items: center;
  gap: 3px;
  svg { display: block; }
`;

const Tree = styled.div`
  flex: 1;
  min-height: 0;
  background: #fff;
  border: 1px solid #6d9fb8;
  border-radius: 4px;
  padding: 1px 0 0;
  font: 11px/16px Roboto, 'DejaVu Sans Condensed', sans-serif;
`;

const TreeRoot = styled.div`
  display: flex;
  align-items: center;
  height: 16px;
  gap: 2px;
  padding-left: 4px;
`;

const TreeItem = styled.li<{ $muted?: boolean }>`
  display: flex;
  align-items: center;
  height: 16px;
  padding-left: 12px;
  color: ${p => (p.$muted ? '#c0c3c5' : INK)};
`;

const Branch = styled.span<{ $last?: boolean }>`
  position: relative;
  width: 12px;
  height: 16px;
  flex: none;
  background:
    repeating-linear-gradient(#8f9aa0 0 1px, transparent 1px 2px) 0 0 / 1px ${p => (p.$last ? '9px' : '16px')} no-repeat,
    repeating-linear-gradient(90deg, #8f9aa0 0 1px, transparent 1px 2px) 0 8px / 12px 1px no-repeat;
`;

const Expander = styled.button`
  position: absolute;
  left: -4px;
  top: 4px;
  width: 9px;
  height: 9px;
  border: 1px solid #8fb0cc;
  border-radius: 2px;
  background:
    linear-gradient(#222, #222) center / 5px 1px no-repeat,
    linear-gradient(#222, #222) center / 1px 5px no-repeat,
    linear-gradient(#fff, #c4daee);
`;

const TreeIcon = styled.svg<{ $muted?: boolean }>`
  display: block;
  flex: none;
  margin-right: 1px;
  background: ${p => (p.$muted ? '#e3e3e3' : 'none')};
`;

const TreeLabel = styled.span<{ $selected?: boolean }>`
  padding: 0 1px;
  line-height: 14px;
  white-space: nowrap;
  color: ${p => (p.$selected ? '#10202c' : 'inherit')};
  background: ${p => (p.$selected ? '#a6e3e8' : 'none')};
`;

const SashColumn = styled.div`
  width: 9px;
  flex: none;
  display: flex;
  flex-direction: column;
  justify-content: center;
  gap: 9px;
  padding-top: 4px;
`;

const Sash = styled.button<{ $raised?: boolean }>`
  height: ${p => (p.$raised ? 92 : 94)}px;
  display: grid;
  place-items: center;
  border: solid ${p => (p.$raised ? '#86939d' : '#a9c6dc')};
  border-width: ${p => (p.$raised ? '2px 0 2px 2px' : '1px 0 1px 1px')};
  border-radius: 4px 0 0 4px;
  background: ${p => (p.$raised ? '#c6dbe9' : 'transparent')};
  &::after {
    content: '';
    width: 3px;
    height: 3px;
    border: 1px solid #1d2a35;
    background: #dfeaf2;
  }
`;

/* ---------- graphics window and palette ---------- */

const Viewport = styled.div`
  flex: 1;
  min-width: 0;
  background: #7d9abf;
`;

const Drawing = styled.svg`
  display: block;
  width: 100%;
  height: 100%;
`;

const Palette = styled.aside`
  flex: none;
  width: 82px;
  padding-top: 4px;
  overflow: hidden;
`;

const PaletteGrip = styled.div`
  height: 3px;
  margin: 0 0 7px 1px;
  ${dotPattern}
`;

const PaletteGrid = styled.div`
  display: grid;
  grid-template-columns: 28px 12px 28px 14px;
  grid-auto-rows: 28px;
`;

const Flyout = styled.button<{ $muted?: boolean }>`
  display: grid;
  place-items: center;
  color: ${p => (p.$muted ? '#b5bec5' : '#333d45')};
`;

/* ---------- parts ---------- */

const Glyph = ({ name }: { name: IconName }) => (
  <svg width="24" height="24" viewBox="0 0 24 24" aria-hidden="true">{icons[name]}</svg>
);

const DownArrow = () => (
  <svg width="7" height="4" viewBox="0 0 7 4" aria-hidden="true"><path d="M0 0H7L3.500 4z" fill="currentColor" /></svg>
);

const RightArrow = () => (
  <svg width="4" height="7" viewBox="0 0 4 7" aria-hidden="true"><path d="M0 0V7L4 3.500z" fill="currentColor" /></svg>
);

type Tool = { icon: IconName; label: string; on?: boolean; drop?: 'normal' | 'muted' | 'joined' };

const t = (icon: IconName, label: string, on = false, drop?: Tool['drop']): Tool => ({ icon, label, on, drop });

const topRow: Tool[][] = [
  [t('newFile', 'New'), t('open', 'Open'), t('save', 'Save'), t('print', 'Print'), t('mailClip', 'Send as attachment'), t('mailLink', 'Send as link')],
  [
    t('undo', 'Undo', false, 'muted'), t('redo', 'Redo', false, 'muted'), t('cut', 'Cut'), t('copy', 'Copy'), t('paste', 'Paste'),
    t('pasteSpecial', 'Paste special'), t('find', 'Find'), t('selectBox', 'Select inside box', true, 'joined'),
  ],
  [
    t('sketchView', 'Sketch view'), t('nodes', 'Spin center', true), t('repaint', 'Repaint'), t('shade', 'Appearance', false, 'normal'),
    t('zoomIn', 'Zoom in'), t('zoomOut', 'Zoom out'), t('refit', 'Refit'), t('reorient', 'Reorient'), t('savedViews', 'Saved views'),
    t('layers', 'Layers'), t('viewManager', 'View manager'),
  ],
  [t('wireframe', 'Wireframe'), t('hiddenLine', 'Hidden line'), t('noHidden', 'No hidden'), t('shaded', 'Shading', true), t('shadow', 'Enhanced realism')],
  [
    t('planeEye', 'Plane display', true), t('axisEye', 'Axis display', true), t('pointsEye', 'Point display', true),
    t('csysEye', 'Csys display', true), t('noteEye', 'Annotation display', true),
  ],
  [t('gridI', 'Shade closed loops'), t('gridPoly', 'Highlight open ends'), t('gridCut', 'Overlapping geometry'), t('gridOk', 'Feature requirements')],
  [t('curvature', 'Curvature')],
];

const lowerRow: Tool[][] = [
  [
    t('placeView', 'Sketch orientation'), t('dimEye', 'Dimensions display', true), t('constrEye', 'Constraints display', true),
    t('gridEye', 'Grid display'), t('vertEye', 'Vertices display', true),
  ],
  [t('scene', 'Scene'), t('sceneGrey', 'Perspective'), t('globeMap', 'Environment'), t('teapotWire', 'Render setup'), t('teapot', 'Render')],
  [t('whatsThis', "What's this")],
];

const Toolbar = ({ groups }: { groups: Tool[][] }) => (
  <ToolRow role="toolbar">
    {groups.map((group, i) => (
      <ToolGroup key={i}>
        <Grip />
        {group.map(tool => (
          <React.Fragment key={tool.icon}>
            <ToolButton aria-label={tool.label} aria-pressed={tool.on} $active={tool.on}>
              <Glyph name={tool.icon} />
            </ToolButton>
            {tool.drop && (
              <DropButton aria-label={`${tool.label} options`} $muted={tool.drop === 'muted'} $joined={tool.drop === 'joined'}>
                <DownArrow />
              </DropButton>
            )}
          </React.Fragment>
        ))}
      </ToolGroup>
    ))}
  </ToolRow>
);

type PaletteRow = { a: IconName; label: string; fly?: 'normal' | 'muted'; b?: IconName; labelB?: string; flyB?: boolean };

const paletteRows: PaletteRow[] = [
  { a: 'pointer', label: 'Select', b: 'sketchTool', labelB: 'Sketch' },
  { a: 'lineTool', label: 'Line', fly: 'normal', b: 'planeTool', labelB: 'Datum plane' },
  { a: 'rectTool', label: 'Rectangle', fly: 'normal', b: 'axisTool', labelB: 'Datum axis' },
  { a: 'circleTool', label: 'Circle', fly: 'normal', b: 'curveTool', labelB: 'Datum curve' },
  { a: 'arcTool', label: 'Arc', fly: 'normal', b: 'pointsTool', labelB: 'Datum point', flyB: true },
  { a: 'filletTool', label: 'Fillet', fly: 'normal', b: 'csysTool', labelB: 'Coordinate system' },
  { a: 'chamferTool', label: 'Chamfer', fly: 'normal', b: 'analysisTool', labelB: 'Analysis feature' },
  { a: 'splineTool', label: 'Spline', b: 'chainTool', labelB: 'Reference' },
  { a: 'pointTool', label: 'Point', fly: 'normal' },
  { a: 'edgeTool', label: 'Use edge', fly: 'normal' },
  { a: 'dimTool', label: 'Dimension', fly: 'normal' },
  { a: 'modifyTool', label: 'Modify' },
  { a: 'constrainTool', label: 'Constrain', fly: 'normal' },
  { a: 'textTool', label: 'Text' },
  { a: 'paletteTool', label: 'Palette' },
  { a: 'trimTool', label: 'Trim', fly: 'normal' },
  { a: 'mirrorTool', label: 'Mirror', fly: 'muted' },
  { a: 'doneTool', label: 'Done' },
  { a: 'quitTool', label: 'Quit' },
];

const planeIcon = <path d="M.8 13L5 3.500H15L10.500 13z" fill="none" stroke={BROWN} strokeWidth="1.500" />;
const mutedSketch = (
  <g>
    <Dots x={1} y={1} n={4} color="#c9c9b8" />
    <path d="M1 12Q3 5 7 5Q11 5 14 12" fill="none" stroke="#c2c1ac" strokeWidth="1.6" />
  </g>
);
const mutedIntersect = (
  <g>
    <circle cx="6" cy="10" r="5" fill="#e4e5da" />
    <path d="M6.5 1.5H15V9Q12 9 11 6Q9 4.5 6.5 4.5z" fill="none" stroke="#c2c1ac" strokeWidth="1.4" />
  </g>
);

type Node = { label: string; icon: React.ReactNode; muted?: boolean; selected?: boolean; expandable?: boolean; fresh?: boolean };

const treeNodes: Node[] = [
  { label: 'RIGHT', icon: planeIcon, selected: true },
  { label: 'TOP', icon: planeIcon },
  { label: 'FRONT', icon: planeIcon },
  { label: 'PRT_CSYS_DEF', icon: <g transform="scale(.8) translate(-2 -2)"><Csys /></g> },
  { label: 'Sketch 1', icon: mutedSketch, muted: true },
  { label: 'Sketch 2', icon: mutedSketch, muted: true },
  { label: 'Sketch 3', icon: mutedSketch, muted: true },
  { label: 'Sketch 4', icon: mutedSketch, muted: true },
  { label: 'Intersect 1', icon: mutedIntersect, muted: true, expandable: true },
  { label: 'Intersect 2', icon: mutedIntersect, muted: true, expandable: true },
  {
    label: 'Boundary Blend 1',
    icon: (
      <g stroke="#4d7378" strokeWidth=".9">
        <path d="M.5 12.5L3.500 5.5L7.500 1Q11 .5 14 3.500L10 8Q5 8 .5 12.5z" fill="#d3fafa" />
        <path d="M3.500 5.5Q8 4.500 12 6M10 8L15.500 3.500V7.500L12 13.500Q12 10 10 8z" fill="#7fe8ea" />
        <path d="M10 8L12 13.5" stroke="#118c8c" strokeWidth="2" />
      </g>
    ),
  },
  {
    label: 'Surface Trim id 146',
    icon: (
      <g>
        <circle cx="6" cy="9.5" r="5" fill="#e2e2e6" stroke="#d89aee" />
        <path d="M6.5 .8H15.2V9.5H11.5" fill="none" stroke="#a32bd6" strokeWidth="1.4" />
        <path d="M6.5 1V5" fill="none" stroke="#a32bd6" strokeWidth="1.4" />
        <path d="M6.5 5V9.5H11" fill="none" stroke="#a8d8f0" strokeWidth="1.4" />
      </g>
    ),
  },
  {
    label: 'Insert Here',
    icon: (
      <g>
        <path d="M3 6H8V2.5L13.5 8H3z" fill="#f01010" />
        <path d="M3 8H13.5L8 13.5V10.5H3z" fill="#8e0808" />
      </g>
    ),
  },
  {
    label: 'Sketch 5',
    fresh: true,
    icon: (
      <g>
        <Dots x={1} y={1} n={4} />
        <path d="M1.5 13Q3 5 7 5Q11 5 14 13" fill="none" stroke="#1673e8" strokeWidth="1.8" />
      </g>
    ),
  },
];

const tabs: { label: string; icon: React.ReactNode }[] = [
  {
    label: 'Model Tree',
    icon: <path d="M6.500 3.500h4v4h-4zM6.500 10.500h4v4h-4zM14.500 10.500h4v4h-4zM6.500 17.500h4v4h-4zM8.500 7.500v3M8.500 14.500v3M10.500 12.500h4" fill="#fff" stroke="#333" />,
  },
  {
    label: 'Folder Browser',
    icon: (
      <g fill="#f8ec50" stroke="#8a7a20">
        <path d="M3.5 12.5V5L5 3.5H9L10.5 5.5H14.5V12.5z" />
        <path d="M6.5 16.5V9L8 7.5H12L13.5 9.5H17.5V16.5z" />
        <path d="M9.5 20.5V13L11 11.5H15L16.5 13.5H20.5V20.5z" fill="#fffaa0" />
      </g>
    ),
  },
  {
    label: 'Favorites',
    icon: (
      <g>
        <path d="M3.5 19.5V7L5 5.5H11L12.5 7.5H19.5V19.5z" fill="#fbef4c" stroke="#7a6c1c" />
        <path d="M11.5 10V17M8 13.5H15M9 11L14 16M14 11L9 16" stroke="#0a1ea8" />
      </g>
    ),
  },
];

const NavigatorPanel = () => (
  <Navigator>
    <NavColumn>
      <TabStrip role="tablist">
        {tabs.map((tab, i) => (
          <Tab key={tab.label} role="tab" aria-label={tab.label} aria-selected={i === 0} $active={i === 0}>
            <TabShape width="46" height="26" viewBox="0 0 46 26" aria-hidden="true">
              <path
                d="M.5 26V3.500Q.5 .5 3.500 .5H29Q33 .5 35 4L45 26z"
                fill={i === 0 ? '#f6fafc' : '#a6c3da'}
              />
              {i === 0 && <path d="M.5 26V3.500Q.5 .5 3.500 .5H29Q33 .5 35 4L45 26" fill="none" stroke="#a3afb8" />}
            </TabShape>
            <TabIcon width="24" height="24" viewBox="0 0 24 24" aria-hidden="true">{tab.icon}</TabIcon>
          </Tab>
        ))}
      </TabStrip>
      <Pane>
        <PaneHead>
          <PaneTitle>Model Tree</PaneTitle>
          <PaneTool aria-label="Settings">
            <svg width="20" height="20" viewBox="0 0 20 20" aria-hidden="true">
              <path d="M1 7L2 4L4 3H9L11 5V7H8V6H4L2 8z" fill="#cfd4d6" stroke="#555" strokeWidth=".8" />
              <path d="M11.500 1.500V4.500L13.500 6L16.500 4.500V1L18.500 3V6L16 8.500H14L11 6V3z" fill="#d9dee0" stroke="#555" strokeWidth=".8" />
              <path d="M5.500 7H8.5V19H5.5z" fill="#e07a20" stroke="#7a3a10" strokeWidth=".8" />
              <path d="M13.5 9H16.5V18H13.5z" fill="#3a70d8" stroke="#173a80" strokeWidth=".8" />
            </svg>
            <DownArrow />
          </PaneTool>
          <PaneTool aria-label="Show">
            <svg width="20" height="20" viewBox="0 0 20 20" aria-hidden="true">
              <path d="M1.500 1.500H13L16.500 5V18.500H1.500z" fill="#f2f8fc" stroke="#506878" />
              <path d="M13 1.500V5H16.5" fill="none" stroke="#506878" />
              <path d="M7 5.500H12M7 10.500H14M7 15.500H14" stroke="#8a9aa5" />
              <path d="M3.500 4.500h2v2h-2zM3.500 9.500h2v2h-2zM3.500 14.500h2v2h-2z" fill="#fff" stroke="#345" strokeWidth=".8" />
            </svg>
            <DownArrow />
          </PaneTool>
        </PaneHead>
        <Tree>
          <TreeRoot>
            <svg width="15" height="15" viewBox="0 0 15 15" aria-hidden="true">
              <path d="M1.5 4L4 1.5H13.5L11.5 4zM11.5 4L13.5 1.5V11L11.5 13.5z" fill="#1b9e9e" stroke="#456" />
              <path d="M1.5 3.5H11.5V13.5H1.5z" fill="#9bffff" stroke="#678" />
            </svg>
            <TreeLabel>PRT0001.PRT</TreeLabel>
          </TreeRoot>
          <ul>
            {treeNodes.map((node, i) => (
              <TreeItem key={node.label} $muted={node.muted}>
                <Branch $last={i === treeNodes.length - 1}>
                  {node.expandable && <Expander aria-label={`Expand ${node.label}`} />}
                </Branch>
                <TreeIcon width="16" height="16" viewBox="0 0 16 16" $muted={node.muted} aria-hidden="true">{node.icon}</TreeIcon>
                {node.fresh && (
                  <svg width="9" height="9" viewBox="0 0 9 9" aria-hidden="true">
                    <path d="M4.5 1V8M1 4.5H8M1 1L8 8M8 1L1 8" stroke="#6b6a00" />
                    <path d="M2.500 2.500H6.500V6.500H2.500z" fill="#ffee00" />
                  </svg>
                )}
                <TreeLabel $selected={node.selected}>{node.label}</TreeLabel>
              </TreeItem>
            ))}
          </ul>
        </Tree>
      </Pane>
    </NavColumn>
    <SashColumn>
      <Sash aria-label="Collapse navigator" />
      <Sash aria-label="Collapse browser" $raised />
    </SashColumn>
  </Navigator>
);

const SketchView = () => (
  <Viewport>
    <Drawing role="img" aria-label="Sketch of a circle over a trimmed boundary blend">
      <defs>
        <linearGradient id="steel" gradientUnits="userSpaceOnUse" x1="267" y1="0" x2="713" y2="0">
          <stop offset="0" stopColor="#98a3a9" />
          <stop offset=".16" stopColor="#a1adb3" />
          <stop offset=".36" stopColor="#b0bfca" />
          <stop offset=".45" stopColor="#bac8d2" />
          <stop offset=".65" stopColor="#b0bec6" />
          <stop offset="1" stopColor="#a4b1b8" />
        </linearGradient>
      </defs>
      <g transform="translate(-267 -146)" fill="none">
        <path d="M267 362Q490 307 713 379V459Q490 531 267 476z" fill="url(#steel)" shapeRendering="crispEdges" />
        <path d="M267 335.5H619M656 335.5H729.5V413M729.5 435V502.5H267" stroke="#96602f" />
        <path d="M267 420.5H713" stroke="#a0602a" />
        <path d="M267 417.5H712" stroke="#7f848c" />
        <path d="M714 336V413M714 424V438M714 448V502" stroke="#96602f" strokeWidth="2" />
        <path d="M712.5 336V413M712.5 448V502" stroke="#7f848c" />
        <g stroke="#f09a1e" strokeDasharray="7 7">
          <path d="M267 419.5H2600" />
          <path d="M713.5 146V1800" />
        </g>
        <path d="M695 419.5H729" stroke="#6e625c" />
        <g stroke="#7c7f86">
          <path d="M656 336.5H667L817 478" strokeWidth="1.200" />
          <path d="M693 359l5 7M698 361l-4 3M810 471l6 7M815 472l-5 4M753.5 420V433M715 428.5h5M747 428.5h6M731 416l6 6M737 416l-6 6M710 441h4l-4 5h4M710 419l2 3v3M714 419l-2 3" />
        </g>
        <circle cx="754" cy="419" r="86" stroke="#ffff00" shapeRendering="crispEdges" />
        <path d="M754 412V426M747 419H761" stroke="#ffe98a" strokeWidth="1.5" />
        <circle cx="754" cy="419" r="3.5" stroke="#ffe98a" strokeWidth="1.5" />
        <path d="M752 417h4v4h-4z" fill="#2c6ae0" />
        <path d="M470.5 421V434" stroke="#00ffff" />
        <path d="M468 433.5h5l-2.5 3.5z" fill="#00ffff" />
        <path d="M474 419.5H485" stroke="#e0602a" />
        <path d="M468 417h5v5h-5z" fill="#2cff2c" />
        <circle cx="487" cy="419.5" r="2" fill="#ff3a2a" />
        <g fontFamily="Lato, sans-serif" fontSize="10">
          <g fill="#74767c">
            <text x="622" y="340">137.71</text>
            <text x="720" y="433">82.68</text>
          </g>
          <g fill="#9a5a28">
            <text x="730" y="335">TOP</text>
            <text x="719" y="413">PRT_CSYS_DEF</text>
            <text x="714" y="503">RIGHT</text>
          </g>
        </g>
      </g>
    </Drawing>
  </Viewport>
);

const ToolPalette = () => (
  <Palette>
    <PaletteGrip />
    <PaletteGrid>
      {paletteRows.map((row, i) => (
        <React.Fragment key={row.a}>
          <ToolButton aria-label={row.label} $active={i === 0}><Glyph name={row.a} /></ToolButton>
          {row.fly ? <Flyout aria-label={`${row.label} options`} $muted={row.fly === 'muted'}><RightArrow /></Flyout> : <span />}
          {row.b ? <ToolButton aria-label={row.labelB}><Glyph name={row.b} /></ToolButton> : <span />}
          {row.flyB ? <Flyout aria-label={`${row.labelB} options`}><RightArrow /></Flyout> : <span />}
        </React.Fragment>
      ))}
    </PaletteGrid>
  </Palette>
);

const menus = ['File', 'Edit', 'View', 'Insert', 'Sketch', 'Analysis', 'Info', 'Applications', 'Tools', 'Window', 'Autodesk Algor Simulation', 'Help'];

export default function App() {
  return (
    <Shell>
      <GlobalStyle />
      <TitleBar>
        <svg width="13" height="13" viewBox="0 0 13 13" aria-hidden="true">
          <path d="M.5 3L3 .5H12.5V10L10 12.5H.5z" fill="#3c5560" stroke="#0a0f14" />
          <path d="M1 3.5H9.5V11.5H1z" fill="#8fd6dc" />
          <path d="M1 3L3 1H12L10 3z" fill="#d6f2f4" />
        </svg>
        <AppTitle>PRT0001 (Active) - Creo Elements/Pro 5.0</AppTitle>
        <WindowButton aria-label="Minimize"><svg width="13" height="13"><path d="M3 10.500h7" stroke="#fff" strokeWidth="3" /></svg></WindowButton>
        <WindowButton aria-label="Maximize"><svg width="13" height="13"><path d="M1.5 2.5h10v9h-10z" fill="none" stroke="#fff" /><path d="M1 2.5h11" stroke="#fff" strokeWidth="3" /></svg></WindowButton>
        <WindowButton aria-label="Close" $close><svg width="13" height="13"><path d="M2 2l9 9M11 2l-9 9" stroke="#fff" strokeWidth="2.4" /></svg></WindowButton>
      </TitleBar>
      <MenuBar>
        {menus.map(m => <MenuItem key={m}>{m}</MenuItem>)}
      </MenuBar>
      <Toolbars>
        <Toolbar groups={topRow} />
        <Toolbar groups={lowerRow} />
      </Toolbars>
      <MessageBar>
        <Bullet />
        <Message>
          When a constraint is active, right click to cycle through lock/disable/enable the constraint. Use Tab key to toggle active constraint. Press and hold Shift to disable snapping to new constraints.
        </Message>
        <StatusCell>
          <svg width="20" height="20" viewBox="0 0 20 20" aria-hidden="true">
            <path d="M8.5 1.5h3v3h-3zM8.5 5.500h3v6h-3z" fill="#ccd2d5" stroke="#9aa2a6" />
            <circle cx="10" cy="14.5" r="4" fill="#b4babd" stroke="#8c9498" />
          </svg>
        </StatusCell>
        <FilterBox>
          <FilterSelect aria-label="Selection filter" defaultValue="All"><option>All</option></FilterSelect>
          <FilterArrow><DownArrow /></FilterArrow>
        </FilterBox>
      </MessageBar>
      <Main>
        <NavigatorPanel />
        <SketchView />
        <ToolPalette />
      </Main>
    </Shell>
  );
}
